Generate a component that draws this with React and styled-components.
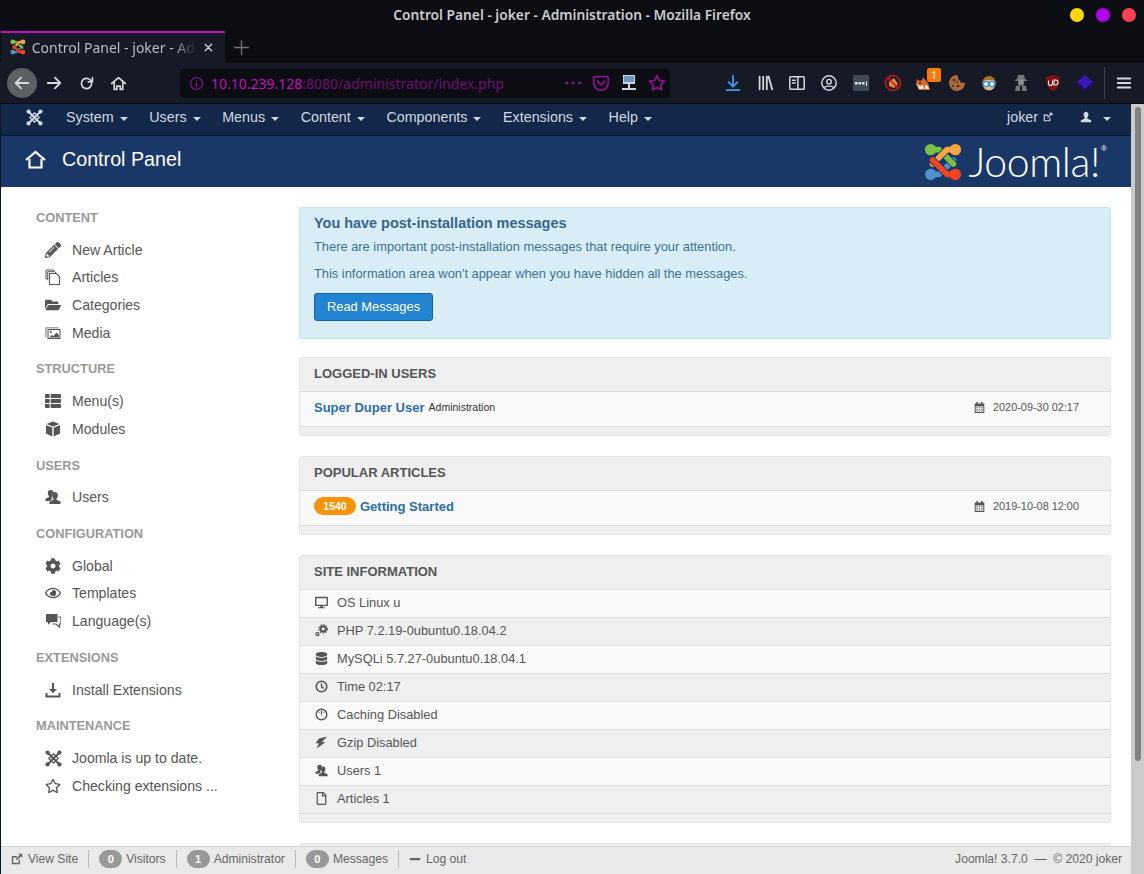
import React from "react";
import styled, { createGlobalStyle } from "styled-components";
import {
  FaPencilAlt,
  FaFolderOpen,
  FaThList,
  FaCog,
  FaRegEye,
  FaRegStar,
  FaDesktop,
  FaDatabase,
  FaRegFile,
  FaMinus,
} from "react-icons/fa";

const GlobalStyle = createGlobalStyle`
  html, body {
    margin: 0;
    padding: 0;
    background: #fff;
    overflow: hidden;
  }
  * { box-sizing: border-box; }
`;

const Window = styled.div`
  width: 1144px;
  height: 874px;
  display: flex;
  flex-direction: column;
  overflow: hidden;
  font-family: "Liberation Sans", Arial, sans-serif;
  background: #0c0d12;
`;

/* ---------- firefox chrome ---------- */

const TitleBar = styled.div`
  height: 31px;
  flex: none;
  display: flex;
  align-items: center;
  justify-content: center;
  position: relative;
  padding-bottom: 2px;
  color: #c9ccd1;
  font: 600 13.77px "Noto Sans", sans-serif;
`;

const WindowDots = styled.div`
  position: absolute;
  right: 8px;
  top: 8px;
  display: flex;
  gap: 12px;
`;

const Dot = styled.span`
  width: 14px;
  height: 14px;
  border-radius: 50%;
  background: ${(p) => p.$color};
`;

const TabBar = styled.div`
  height: 32px;
  flex: none;
  display: flex;
  align-items: center;
  padding-left: 1px;
`;

const Tab = styled.div`
  width: 224px;
  height: 32px;
  display: flex;
  align-items: center;
  padding: 0 10px 2px 9px;
  gap: 6px;
  background: #161a26;
  border-top: 2px solid #c20fbe;
  color: #b9bcc3;
  font: 14px "Noto Sans", sans-serif;
`;

const TabTitle = styled.span`
  width: 167px;
  white-space: nowrap;
  overflow: hidden;
  -webkit-mask-image: linear-gradient(to right, #000 85%, transparent);
  mask-image: linear-gradient(to right, #000 85%, transparent);
`;

const NewTab = styled.span`
  margin-left: 8px;
  color: #70737b;
  display: flex;
`;

const Toolbar = styled.div`
  height: 41px;
  flex: none;
  display: flex;
  align-items: center;
  background: #161a26;
  border-bottom: 1px solid #0a0c11;
  padding-left: 7px;
`;

const NavButton = styled.span`
  width: 30px;
  height: 30px;
  margin-right: 2px;
  border-radius: 50%;
  display: flex;
  align-items: center;
  justify-content: center;
  color: #d6d8dc;
  background: ${(p) => (p.$active ? "#5c5f64" : "transparent")};
`;

const UrlBar = styled.div`
  margin-left: 45px;
  width: 490px;
  height: 29px;
  border-radius: 4px;
  background: #0c0d12;
  display: flex;
  align-items: center;
  padding-left: 9px;
  font: 14px "Noto Sans", sans-serif;
  color: #6d1072;
`;

const UrlHost = styled.span`
  color: #c20fbe;
`;

const UrlText = styled.span`
  margin-left: 7px;
  flex: 1;
  white-space: nowrap;
`;

const UrlActions = styled.div`
  display: flex;
  align-items: center;
  gap: 10px;
  padding-right: 4px;
`;

const UrlIcon = styled.span`
  width: 18px;
  height: 18px;
  display: flex;
  align-items: center;
  justify-content: center;
`;

const ToolIcons = styled.div`
  margin-left: 47px;
  display: flex;
  align-items: center;
`;

const ToolIcon = styled.span`
  width: 32px;
  height: 32px;
  display: flex;
  align-items: center;
  justify-content: center;
  position: relative;
`;

const ToolBadge = styled.span`
  position: absolute;
  top: 1px;
  right: 0;
  width: 14px;
  height: 14px;
  border-radius: 2px;
  background: #f47a10;
  color: #fff;
  font: 10px/14px "Noto Sans", sans-serif;
  text-align: center;
`;

const ToolDivider = styled.span`
  width: 1px;
  height: 32px;
  margin: 0 3px;
  background: #3b3e47;
`;

/* ---------- page ---------- */

const Viewport = styled.div`
  flex: 1;
  min-height: 0;
  display: flex;
  background: #fff;
`;

const Page = styled.div`
  flex: 1;
  min-width: 0;
  display: flex;
  flex-direction: column;
  border-left: 1px solid #0c1422;
`;

const Scrollbar = styled.div`
  width: 13px;
  flex: none;
  background: #cbcbcb;
  padding: 3px 3px 0 4px;
`;

const ScrollThumb = styled.div`
  height: 654px;
  border-radius: 3px;
  background: #7f8282;
`;

const Navbar = styled.nav`
  height: 32px;
  flex: none;
  display: flex;
  align-items: center;
  padding: 0 20px 5px 25px;
  background: #12274a;
  border-bottom: 1px solid #0b1a33;
  color: #d4d8df;
  font-size: 14.3px;
`;

const NavLogo = styled.span`
  display: flex;
  width: 40px;
`;

const NavItem = styled.span`
  display: flex;
  align-items: center;
  margin-right: 21.6px;
`;

const Caret = styled.span`
  width: 0;
  height: 0;
  margin: 3px 0 0 6px;
  border-left: 4px solid transparent;
  border-right: 4px solid transparent;
  border-top: 4px solid #d4d8df;
`;

const NavRight = styled.div`
  margin-left: auto;
  display: flex;
  align-items: center;
`;

const JokerLink = styled.span`
  display: flex;
  align-items: center;
  gap: 5px;
  margin-right: 27px;
`;

const UserMenu = styled.span`
  display: flex;
  align-items: center;
  gap: 5px;
`;

const Subhead = styled.header`
  height: 51px;
  flex: none;
  display: flex;
  align-items: center;
  padding: 0 24px 4px 24px;
  background: #1a3867;
  color: #fff;
`;

const PageTitle = styled.h1`
  margin: 0 0 0 16px;
  font-size: 19.7px;
  font-weight: 400;
`;

const Brand = styled.div`
  margin-left: auto;
  display: flex;
  align-items: center;
  gap: 7px;
  transform: translateY(2px);
`;

const BrandName = styled.span`
  font: 300 41px/36px Lato, sans-serif;
  letter-spacing: -0.4px;
  position: relative;
  padding-right: 7px;
`;

const Registered = styled.span`
  position: absolute;
  right: 0;
  top: 0;
  font: 8px/10px "Liberation Sans", sans-serif;
  letter-spacing: 0;
`;

const Content = styled.div`
  flex: 1;
  min-height: 0;
  overflow: hidden;
  display: grid;
  grid-template-columns: 298px 812px;
`;

const Sidebar = styled.aside`
  padding: 22px 0 0 35px;
`;

const SideHeading = styled.div`
  height: 18px;
  margin: 13.8px 0 9px;
  line-height: 18px;
  font-size: 12.8px;
  font-weight: 700;
  color: #999;
  text-transform: uppercase;
  &:first-child { margin-top: 0; }
`;

const SideItem = styled.div`
  height: 27.67px;
  display: flex;
  align-items: center;
  padding-left: 9px;
  font-size: 14.1px;
  color: #555;
`;

const SideIcon = styled.span`
  width: 27px;
  display: flex;
  align-items: center;
  svg { display: block; }
`;

const Main = styled.main`
  padding-top: 20px;
`;

const Alert = styled.div`
  height: 132px;
  margin-bottom: 18px;
  padding: 6px 14px;
  background: #d9edf7;
  border: 1px solid #bce8f1;
  border-radius: 3px;
  color: #3a7394;
  font-size: 12.87px;
`;

const AlertTitle = styled.h4`
  margin: 0 0 6px;
  font-size: 14.45px;
  line-height: 18px;
  font-weight: 700;
  color: #33688a;
`;

const AlertText = styled.p`
  margin: 0 0 9px;
  line-height: 18px;
`;

const PrimaryButton = styled.button`
  display: block;
  width: 119px;
  height: 28px;
  margin-top: 10px;
  padding: 0 0 2px;
  border: 1px solid #15609f;
  border-radius: 3px;
  background: #2384d3;
  color: #fff;
  font: 12.9px "Liberation Sans", sans-serif;
`;

const Panel = styled.section`
  margin-bottom: 20px;
  background: #efefef;
  border: 1px solid #e6e6e6;
  border-radius: 3px;
  padding-bottom: 8px;
`;

const PanelTitle = styled.h2`
  height: 33px;
  margin: 0;
  padding-left: 14px;
  line-height: 32px;
  font-size: 13px;
  font-weight: 700;
  color: #555;
  text-transform: uppercase;
`;

const PanelRow = styled.div`
  height: 36px;
  display: flex;
  align-items: center;
  padding: 0 31px 4px 14px;
  background: #f9f9f9;
  border-top: 1px solid #ddd;
  border-bottom: 1px solid #ddd;
`;

const RowLink = styled.a`
  font-size: 13px;
  font-weight: 700;
  color: #2c6ea6;
`;

const RowNote = styled.small`
  margin-left: 4px;
  font-size: 10.5px;
  color: #333;
`;

const Hits = styled.span`
  width: 42px;
  height: 18px;
  margin-right: 4px;
  border-radius: 9px;
  background: #f89406;
  color: #fff;
  font-size: 10.5px;
  font-weight: 700;
  line-height: 18px;
  text-align: center;
`;

const RowDate = styled.span`
  margin-left: auto;
  display: flex;
  align-items: center;
  gap: 8px;
  font-size: 10.9px;
  color: #555;
`;

const InfoRow = styled.div`
  height: 28px;
  display: flex;
  align-items: center;
  padding: 0 0 2px 15px;
  gap: 9px;
  background: ${(p) => (p.$even ? "#efefef" : "#fafafa")};
  border-top: 1px solid #ddd;
  font-size: 12.83px;
  color: #555;
  &:last-child { border-bottom: 1px solid #ddd; height: 29px; }
`;

const InfoIcon = styled.span`
  width: 13px;
  display: flex;
  justify-content: center;
`;

const StatusBar = styled.footer`
  height: 28px;
  flex: none;
  display: flex;
  align-items: center;
  padding: 0 9px 3px 10px;
  background: #e9e9e9;
  border-top: 1px solid #d5d5d5;
  font-size: 12.1px;
  line-height: 18px;
  color: #666;
`;

const StatusItem = styled.span`
  display: flex;
  align-items: center;
  gap: ${(p) => p.$gap || 4}px;
  padding-right: 10px;
  margin-right: 10px;
  border-right: 1px solid #bbb;
  height: 18px;
  &:last-of-type { border-right: none; }
`;

const CountBadge = styled.span`
  width: 23px;
  height: 18px;
  border-radius: 9px;
  background: #999;
  color: #fff;
  font-size: 11px;
  font-weight: 700;
  line-height: 18px;
  text-align: center;
`;

const Copyright = styled.div`
  margin-left: auto;
`;

/* ---------- drawings ---------- */

function JoomlaMark({ size = 38, mono, back = "#1a3867" }) {
  if (mono) {
    return (
      <svg width={size} height={size} viewBox="0 0 40 40" fill="none" stroke="currentColor" strokeWidth="4.5">
        <path d="M7 7l26 26M33 7L7 33" />
        <path d="M20 9l11 11-11 11L9 20z" strokeWidth="3" />
        <g fill="currentColor" stroke="none">
          <circle cx="6" cy="6" r="5" />
          <circle cx="34" cy="6" r="5" />
          <circle cx="6" cy="34" r="5" />
          <circle cx="34" cy="34" r="5" />
        </g>
      </svg>
    );
  }
  const arm = (d, color) => (
    <>
      <path d={d} stroke={back} strokeWidth="8" />
      <path d={d} stroke={color} strokeWidth="6" />
    </>
  );
  return (
    <svg width={size} height={size} viewBox="0 0 40 40" fill="none" strokeLinejoin="round" strokeLinecap="round">
      {arm("M8 33L16 33 31 18", "#5091cd")}
      <circle cx="7" cy="33" r="6" fill="#5091cd" />
      {arm("M8 7L16 7 31 22", "#7ac143")}
      <circle cx="7" cy="7" r="6" fill="#7ac143" />
      {arm("M32 7L24 7 9 22", "#f9a541")}
      <circle cx="33" cy="7" r="6" fill="#f9a541" />
      {arm("M32 33L24 33 9 18", "#f44321")}
      <circle cx="33" cy="33" r="6" fill="#f44321" />
    </svg>
  );
}

const stroke = { fill: "none", stroke: "currentColor", strokeWidth: 2, strokeLinecap: "round", strokeLinejoin: "round" };

function Glyph({ d, size = 18, color = "#d6d8dc", width = 2 }) {
  return (
    <svg width={size} height={size} viewBox="0 0 20 20" {...stroke} strokeWidth={width} style={{ color }}>
      <path d={d} />
    </svg>
  );
}

// joomla's own icon font has no match in the packages, so these are drawn by hand
function Solid({ size = 16, children }) {
  return (
    <svg width={size} height={size} viewBox="0 0 16 16" fill="currentColor">
      {children}
    </svg>
  );
}

const IconArticles = ({ size }) => (
  <Solid size={size}>
    <path d="M1 1h7l2 1.5M1 1v8l1 1M2.7 2.7h7l1.6 1.6M2.7 2.7v8.5" fill="none" stroke="currentColor" strokeWidth="1" />
    <path d="M4.5 4.5h7l3 3v8h-10z" fill="none" stroke="currentColor" strokeWidth="1.1" />
  </Solid>
);

const IconMedia = ({ size }) => (
  <Solid size={size}>
    <path d="M.5 2.5h13v.8H1.3v9H.5z" />
    <path d="M2.5 4h13v10h-13zM3.5 5v8h11V5z" fillRule="evenodd" />
    <circle cx="5.7" cy="7" r="1.1" />
    <path d="M4 12.5l3-2.5 1.5 1 3-3.5 2.5 3v2z" />
  </Solid>
);

const IconCube = ({ size }) => (
  <Solid size={size}>
    <path d="M8 .5l6.5 2.6L8 5.6 1.5 3.1z" />
    <path d="M1 4.2l6.3 2.4v8.8L1 12.6zM15 4.2L8.7 6.6v8.8l6.3-2.8z" />
  </Solid>
);

const IconUsers = ({ size }) => (
  <Solid size={size}>
    <path d="M5.3 1C3.6 1 2.8 2.4 2.8 4c0 1.3.5 2.4 1.2 3.1v1L.5 9.8V12h4.2l2.6-1.7-1-1.5c1-.9 1.1-2.500 1.1-3.700.3-1.200.8-1.800 1.300-2.200C8.300 1.700 7 1 5.300 1z" />
    <path d="M10 3c-1.900 0-2.800 1.500-2.800 3.300 0 1.400.6 2.600 1.300 3.300v1.100L4.500 12.600V15h11v-2.400l-4-1.900V9.600c.7-.7 1.300-1.900 1.300-3.300C12.800 4.500 11.900 3 10 3z" />
  </Solid>
);

const IconComments = ({ size }) => (
  <Solid size={size}>
    <path d="M1 1h11.5v8H6l-3 2.700V9H1z" />
    <path d="M13.5 4H16v7h-1.500v3L11 11H7.500" fill="none" stroke="currentColor" strokeWidth="1.2" />
  </Solid>
);

const IconInstall = ({ size }) => (
  <Solid size={size}>
    <path d="M7 1h2v6h3L8 11.200 4 7h3z" />
    <path d="M.5 11h2v2.500h11V11h2v4.500H.5z" />
  </Solid>
);

const IconPhp = ({ size }) => (
  <Solid size={size}>
    <circle cx="10" cy="6" r="3.3" fill="none" stroke="currentColor" strokeWidth="2.6" />
    <circle cx="10" cy="6" r="5.2" fill="none" stroke="currentColor" strokeWidth="1.6" strokeDasharray="1.8 1.63" />
    <circle cx="3" cy="12.5" r="1.8" fill="none" stroke="currentColor" strokeWidth="1.6" />
  </Solid>
);

const IconClock = ({ size }) => (
  <Solid size={size}>
    <circle cx="8" cy="8" r="6.5" fill="none" stroke="currentColor" strokeWidth="2" />
    <path d="M8 4v4.500l3 1.800" fill="none" stroke="currentColor" strokeWidth="1.7" />
  </Solid>
);

const IconGauge = ({ size }) => (
  <Solid size={size}>
    <circle cx="8" cy="8" r="6.5" fill="none" stroke="currentColor" strokeWidth="1.8" />
    <path d="M7.200 3.500h1.600L8.500 9h-1zM4 5l1-.7 1 1.700-.7.500zM12 5l-1-.7-1 1.700.7.500z" />
  </Solid>
);

const IconBolt = ({ size }) => (
  <Solid size={size}>
    <path d="M15 .5L5 3 .5 9h4.200L2 15.500 13 7.500H8.500z" />
  </Solid>
);

const IconCalendar = ({ size }) => (
  <Solid size={size}>
    <path d="M1 2h14v14H1zM2.500 6v8.500h11V6z" fillRule="evenodd" />
    <path d="M3.500 0h2v3h-2zM10.500 0h2v3h-2z" />
    <path d="M3.500 7h2v1.500h-2zM7 7h2v1.500H7zM10.500 7h2v1.500h-2zM3.500 9.700h2v1.500h-2zM7 9.700h2v1.500H7zM10.500 9.700h2v1.500h-2zM3.500 12.400h2v1.500h-2zM7 12.400h2v1.500H7zM10.500 12.400h2v1.500h-2z" />
  </Solid>
);

const IconExternal = ({ size }) => (
  <Solid size={size}>
    <path d="M11 9v5H2V5h6" fill="none" stroke="currentColor" strokeWidth="1.8" />
    <path d="M9.500 1H15v5.500l-2-2-5 5L6.500 8l5-5z" />
  </Solid>
);

const IconUser = ({ size }) => (
  <Solid size={size}>
    <path d="M8 1C5.800 1 4.800 2.800 4.800 5c0 1.700.7 3 1.500 3.800V10L1 12.500V15h14v-2.500L9.700 10V8.800c.8-.8 1.500-2.100 1.500-3.800C11.200 2.800 10.200 1 8 1z" />
  </Solid>
);

function Extension({ kind }) {
  const box = { width: 18, height: 18, viewBox: "0 0 18 18" };
  switch (kind) {
    case "dots":
      return (
        <svg width="16" height="16" viewBox="0 0 16 16">
          <rect width="16" height="16" rx="1" fill="#3f4a52" />
          <path d="M2 7h2.500v2.500H2zM5.500 7H8v2.500H5.500zM9 7h2.500v2.500H9z" fill="#e4e6e8" />
          <path d="M13 6h1v5h-1z" fill="#e4e6e8" />
        </svg>
      );
    case "noscript":
      return (
        <svg {...box}>
          <circle cx="9" cy="9" r="7" fill="#1b1b22" />
          <path d="M5 8l5-4 4 6-4 4-5-2z" fill="#d98f2b" />
          <circle cx="9" cy="9" r="7.5" fill="none" stroke="#c8141a" strokeWidth="1.6" />
          <path d="M4 4l10 10" stroke="#c8141a" strokeWidth="1.6" />
        </svg>
      );
    case "fox":
      return (
        <svg {...box} style={{ marginLeft: -2 }}>
          <path d="M2 5l3 2 2-1 1-3 2 3 3 3 2 7H4L1 10z" fill="#d9662a" />
          <path d="M2 10l3 2 3-1 1 4H4zM10 11l3 1 1 3h-4z" fill="#f3e3d3" />
          <circle cx="5" cy="9" r=".9" fill="#222" />
        </svg>
      );
    case "cookie":
      return (
        <svg {...box}>
          <path d="M9 1a8 8 0 1 0 8 8l-2.500-.5L13 9l-1-2.500-1.500-1L10 2.500z" fill="#a96a3d" />
          <circle cx="6" cy="6" r="1.3" fill="#4a2a14" />
          <circle cx="10" cy="12" r="1.3" fill="#4a2a14" />
          <circle cx="5" cy="12" r="1" fill="#4a2a14" />
          <circle cx="9" cy="8" r=".8" fill="#4a2a14" />
        </svg>
      );
    case "nerd":
      return (
        <svg {...box}>
          <circle cx="9" cy="10" r="6.5" fill="#e8b783" />
          <path d="M2 10a7 8 0 0 1 14 0l-2-4H5z" fill="#a9702c" />
          <circle cx="6" cy="10" r="2.6" fill="#dff1fc" stroke="#2f8fe0" strokeWidth="1.2" />
          <circle cx="12" cy="10" r="2.6" fill="#dff1fc" stroke="#2f8fe0" strokeWidth="1.2" />
        </svg>
      );
    case "spy":
      return (
        <svg {...box}>
          <path d="M6 1h6l1 4 2 1v1H3V6l2-1z" fill="#74787c" />
          <circle cx="9" cy="8.5" r="3" fill="#8a8e91" />
          <path d="M3 17l1-5 4-1v6zM10 17v-6l4 1 1 5z" fill="#74787c" />
        </svg>
      );
    case "ublock":
      return (
        <svg {...box}>
          <path d="M9 1l7 2c0 8-2 12-7 14C4 15 2 11 2 3z" fill="#7c1212" />
          <path d="M4.500 6.500v3a2 2 0 0 0 4 0v-3M10 6h1.500a2.500 2.500 0 0 1 0 5H10z" fill="none" stroke="#eee" strokeWidth="1.1" />
        </svg>
      );
    default:
      return (
        <svg {...box}>
          <path d="M9 1l8 7-8 7-8-7z" fill="#3a16b8" />
          <path d="M1 8l8 7 8-7v2.500l-8 7-8-7z" fill="#1d0c66" />
        </svg>
      );
  }
}

const sideGroups = [
  { title: "Content", items: [[FaPencilAlt, "New Article"], [IconArticles, "Articles"], [FaFolderOpen, "Categories"], [IconMedia, "Media"]] },
  { title: "Structure", items: [[FaThList, "Menu(s)"], [IconCube, "Modules"]] },
  { title: "Users", items: [[IconUsers, "Users"]] },
  { title: "Configuration", items: [[FaCog, "Global"], [FaRegEye, "Templates"], [IconComments, "Language(s)"]] },
  { title: "Extensions", items: [[IconInstall, "Install Extensions"]] },
  { title: "Maintenance", items: [["joomla", "Joomla is up to date."], [FaRegStar, "Checking extensions ..."]] },
];

const siteInfo = [
  [FaDesktop, "OS Linux u"],
  [IconPhp, "PHP 7.2.19-0ubuntu0.18.04.2"],
  [FaDatabase, "MySQLi 5.7.27-0ubuntu0.18.04.1"],
  [IconClock, "Time 02:17"],
  [IconGauge, "Caching Disabled"],
  [IconBolt, "Gzip Disabled"],
  [IconUsers, "Users 1"],
  [FaRegFile, "Articles 1"],
];

const menus = ["System", "Users", "Menus", "Content", "Components", "Extensions", "Help"];
const extensions = ["dots", "noscript", "fox", "cookie", "nerd", "spy", "ublock", "gem"];

export default function App() {
  return (
    <Window>
      <GlobalStyle />
      <TitleBar>
        Control Panel - joker - Administration - Mozilla Firefox
        <WindowDots>
          <Dot $color="#ffd60a" />
          <Dot $color="#b100ea" />
          <Dot $color="#ff4053" />
        </WindowDots>
      </TitleBar>

      <TabBar>
        <Tab>
          <JoomlaMark size={16} back="#161a26" />
          <TabTitle>Control Panel - joker - Administration</TabTitle>
          <Glyph d="M5 5l10 10M15 5L5 15" size={13} width={2} />
        </Tab>
        <NewTab>
          <Glyph d="M10 2v16M2 10h16" size={17} color="#70737b" width={1.6} />
        </NewTab>
      </TabBar>

      <Toolbar>
        <NavButton $active>
          <Glyph d="M17 10H3M9 4l-6 6 6 6" />
        </NavButton>
        <NavButton>
          <Glyph d="M3 10h14M11 4l6 6-6 6" />
        </NavButton>
        <NavButton>
          <Glyph d="M16 10a6 6 0 1 1-2-4.5L17 8M17 3v5h-5" size={17} />
        </NavButton>
        <NavButton>
          <Glyph d="M2 10l8-7 8 7M5 9v8h3v-4h4v4h3V9" size={17} />
        </NavButton>
        <UrlBar>
          <Glyph d="M10 2a8 8 0 1 0 0 16 8 8 0 0 0 0-16zM10 9v5M10 6v.5" size={15} color="#8a1190" width={1.6} />
          <UrlText>
            <UrlHost>10.10.239.128</UrlHost>:8080/administrator/index.php
          </UrlText>
          <UrlActions>
            <UrlIcon>
              <Glyph d="M3 10h.5M10 10h.5M17 10h.5" color="#8a1190" width={3} />
            </UrlIcon>
            <UrlIcon>
              <Glyph d="M3 3h14a1 1 0 0 1 1 1v6a8 8 0 0 1-16 0V4a1 1 0 0 1 1-1zM6 8l4 4 4-4" color="#8a1190" />
            </UrlIcon>
            <UrlIcon>
              <svg width="18" height="18" viewBox="0 0 18 18">
                <rect x="3" y="1" width="12" height="9" fill="#cdd6e0" />
                <rect x="4" y="2" width="10" height="6" fill="#6f95c0" />
                <path d="M9 10v4M2 15h14" stroke="#cdd6e0" strokeWidth="2" />
              </svg>
            </UrlIcon>
            <UrlIcon>
              <Glyph d="M10 2l2.500 5.200 5.700.8-4.100 4 1 5.700L10 15l-5.100 2.700 1-5.700-4.100-4 5.700-.8z" color="#8a1190" />
            </UrlIcon>
          </UrlActions>
        </UrlBar>
        <ToolIcons>
          <ToolIcon>
            <Glyph d="M10 2v12M5 9l5 5 5-5M3 18h14" color="#3b9bf0" />
          </ToolIcon>
          <ToolIcon>
            <Glyph d="M4 3v14M8 3v14M12 3v14M14 3l4 14" />
          </ToolIcon>
          <ToolIcon>
            <Glyph d="M3 3h14a1 1 0 0 1 1 1v12a1 1 0 0 1-1 1H3a1 1 0 0 1-1-1V4a1 1 0 0 1 1-1zM11 3v14M5 7h3M5 10h3" width={1.7} />
          </ToolIcon>
          <ToolIcon>
            <Glyph d="M10 2a8 8 0 1 0 0 16 8 8 0 0 0 0-16zM10 6a2.500 2.500 0 1 0 0 5 2.500 2.500 0 0 0 0-5zM5 15c1-2 9-2 10 0" width={1.6} />
          </ToolIcon>
          {extensions.map((name) => (
            <ToolIcon key={name}>
              <Extension kind={name} />
              {name === "fox" && <ToolBadge>1</ToolBadge>}
            </ToolIcon>
          ))}
          <ToolDivider />
          <ToolIcon>
            <Glyph d="M3 5h14M3 10h14M3 15h14" />
          </ToolIcon>
        </ToolIcons>
      </Toolbar>

      <Viewport>
        <Page>
          <Navbar>
            <NavLogo>
              <JoomlaMark size={17} mono />
            </NavLogo>
            {menus.map((m) => (
              <NavItem key={m}>
                {m}
                <Caret />
              </NavItem>
            ))}
            <NavRight>
              <JokerLink>
                joker <IconExternal size={10} />
              </JokerLink>
              <UserMenu>
                <IconUser size={12} />
                <Caret />
              </UserMenu>
            </NavRight>
          </Navbar>

          <Subhead>
            <svg width="21" height="19" viewBox="0 0 21 19" fill="none" stroke="#fff" strokeWidth="2.2">
              <path d="M1 10l9.500-8 9.500 8" />
              <path d="M4.500 9v8.500h12V9" />
            </svg>
            <PageTitle>Control Panel</PageTitle>
            <Brand>
              <JoomlaMark size={38} />
              <BrandName>
                Joomla!
                <Registered>®</Registered>
              </BrandName>
            </Brand>
          </Subhead>

          <Content>
            <Sidebar>
              {sideGroups.map((group) => (
                <React.Fragment key={group.title}>
                  <SideHeading>{group.title}</SideHeading>
                  {group.items.map(([Icon, label]) => (
                    <SideItem key={label}>
                      <SideIcon>
                        {Icon === "joomla" ? <JoomlaMark size={17} mono /> : <Icon size={16} />}
                      </SideIcon>
                      {label}
                    </SideItem>
                  ))}
                </React.Fragment>
              ))}
            </Sidebar>

            <Main>
              <Alert>
                <AlertTitle>You have post-installation messages</AlertTitle>
                <AlertText>There are important post-installation messages that require your attention.</AlertText>
                <AlertText>This information area won't appear when you have hidden all the messages.</AlertText>
                <PrimaryButton>Read Messages</PrimaryButton>
              </Alert>

              <Panel>
                <PanelTitle>Logged-in Users</PanelTitle>
                <PanelRow>
                  <RowLink>Super Duper User</RowLink>
                  <RowNote>Administration</RowNote>
                  <RowDate>
                    <IconCalendar size={11} /> 2020-09-30 02:17
                  </RowDate>
                </PanelRow>
              </Panel>

              <Panel>
                <PanelTitle>Popular Articles</PanelTitle>
                <PanelRow>
                  <Hits>1540</Hits>
                  <RowLink>Getting Started</RowLink>
                  <RowDate>
                    <IconCalendar size={11} /> 2019-10-08 12:00
                  </RowDate>
                </PanelRow>
              </Panel>

              <Panel>
                <PanelTitle>Site Information</PanelTitle>
                {siteInfo.map(([Icon, label], i) => (
                  <InfoRow key={label} $even={i % 2 === 1}>
                    <InfoIcon>
                      <Icon size={13} />
                    </InfoIcon>
                    {label}
                  </InfoRow>
                ))}
              </Panel>

              <Panel />
            </Main>
          </Content>

          <StatusBar>
            <StatusItem $gap={5}>
              <IconExternal size={12} /> View Site
            </StatusItem>
            <StatusItem>
              <CountBadge>0</CountBadge> Visitors
            </StatusItem>
            <StatusItem>
              <CountBadge>1</CountBadge> Administrator
            </StatusItem>
            <StatusItem>
              <CountBadge>0</CountBadge> Messages
            </StatusItem>
            <StatusItem $gap={5}>
              <FaMinus size={12} /> Log out
            </StatusItem>
            <Copyright>Joomla! 3.7.0 &nbsp;—&nbsp; © 2020 joker</Copyright>
          </StatusBar>
        </Page>
        <Scrollbar>
          <ScrollThumb />
        </Scrollbar>
      </Viewport>
    </Window>
  );
}
